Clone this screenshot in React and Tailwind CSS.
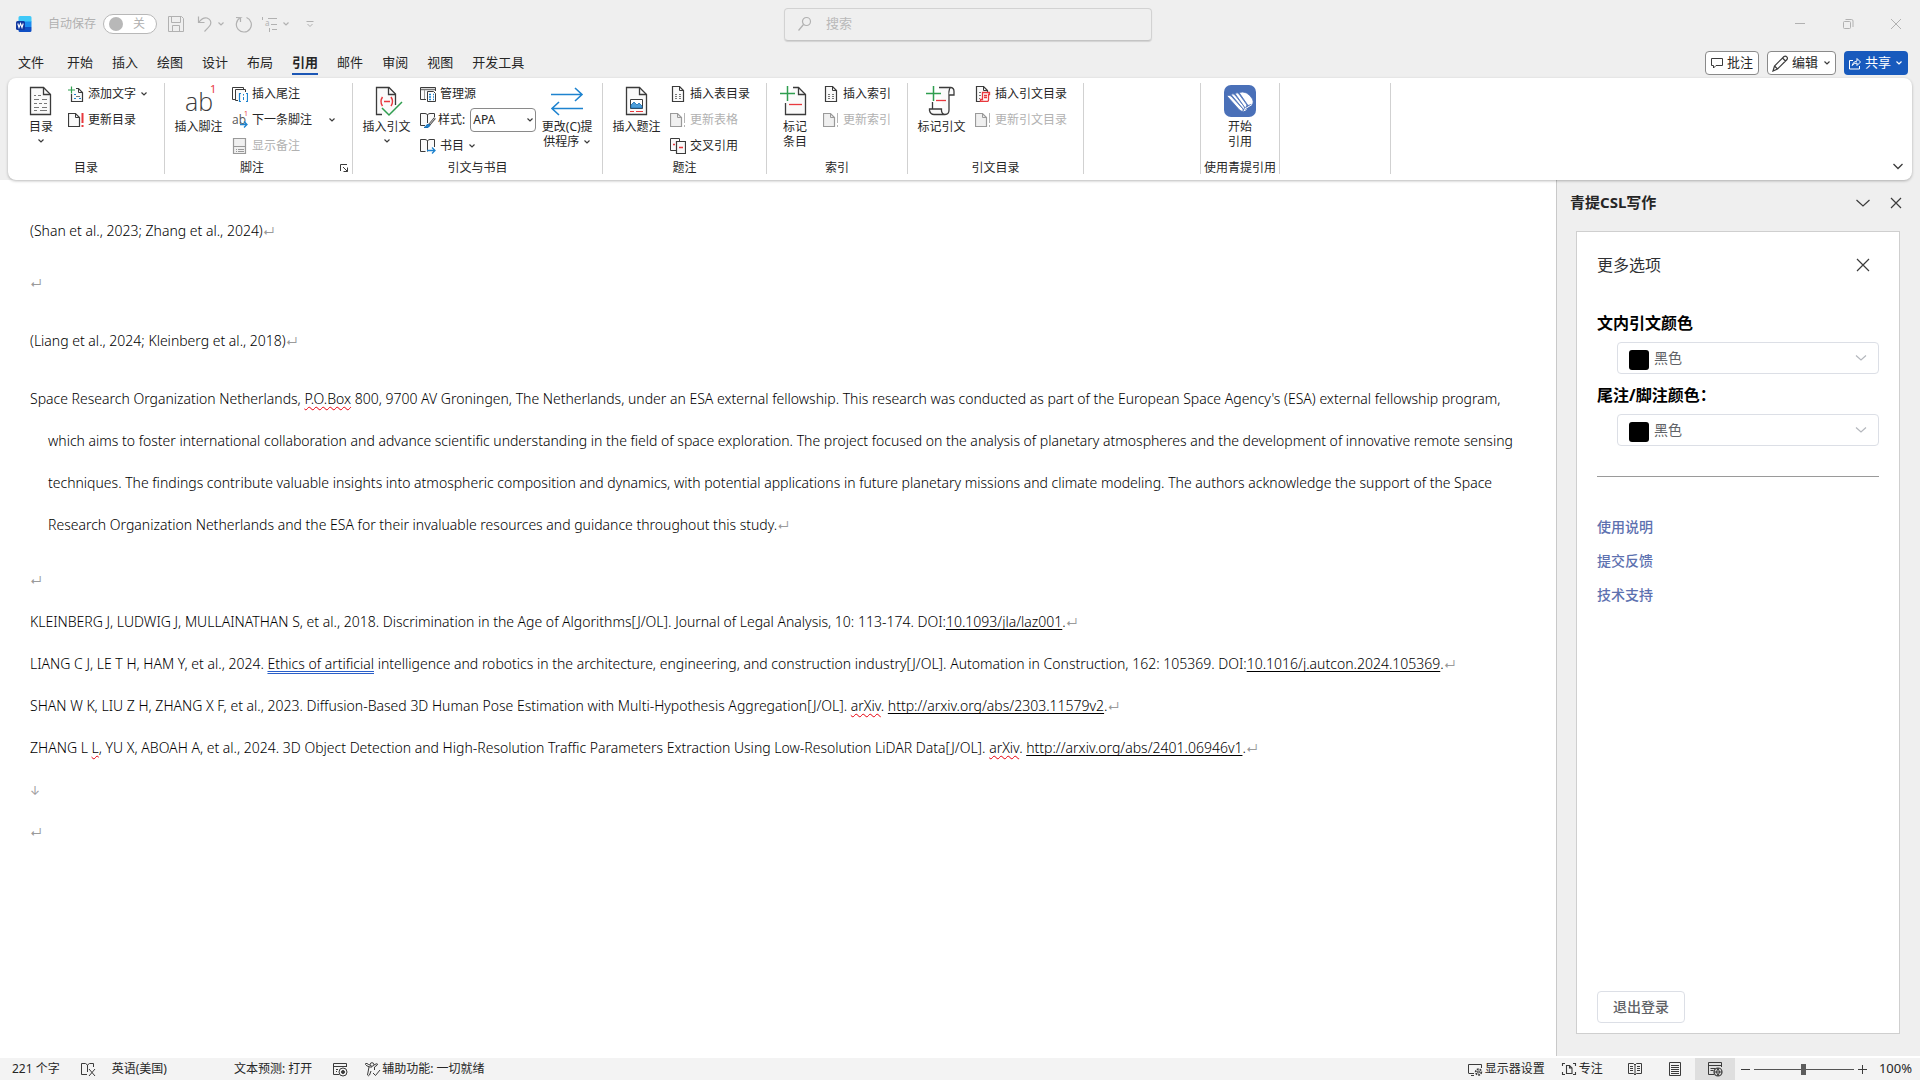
import React from 'react';

const INK = '#3b3b3b';
const RED = '#e8383d';
const GREEN = '#2f9e4f';
const BLUE = '#1e83cf';
const MUTED = '#b1b1b1';

function Svg({ w = 16, h = 16, children, className = '', stroke = INK }) {
  return (
    <svg width={w} height={h} viewBox={`0 0 ${w} ${h}`} fill="none" stroke={stroke} strokeWidth="1" aria-hidden="true" className={`shrink-0 ${className}`}>
      {children}
    </svg>
  );
}

const Caret = ({ className = '', color = INK }) => (
  <Svg w={8} h={6} stroke={color} className={className}><path d="M1.5 1.5 4 4l2.5-2.5" strokeWidth="1.2" /></Svg>
);

/* ---------- large ribbon icons, 32px ---------- */
const TocIcon = () => (
  <Svg w={32} h={32}>
    <path d="M5.5 2.5h13l7 7v20h-20z" fill="#fafafa" strokeWidth="1.3" />
    <path d="M18.500 2.500v7h7" strokeWidth="1.3" />
    <path d="M9 10.500h2m2 0h3M9 14.500h5m3 0h5M9 18.500h3m2 0h3m2 0h3M9 22.500h5m3 0h5M9 25.500h3m3 0h7" stroke="#777" />
  </Svg>
);
const FootnoteIcon = () => (
  <svg width="32" height="32" viewBox="0 0 32 32" aria-hidden="true" className="overflow-visible">
    <text x="2" y="26" fontSize="25" fontWeight="300" fontFamily="'Open Sans','Noto Sans',sans-serif" fill={INK}>ab</text>
    <text x="27" y="8" fontSize="11" fontFamily="'Noto Sans',sans-serif" fill={RED}>1</text>
  </svg>
);
const CiteIcon = () => (
  <Svg w={32} h={32}>
    <path d="M5.500 2.500h12.500l7 7v20h-19.500z" fill="#fafafa" stroke="none" />
    <path d="M11 29.500H5.500v-27H18l6.500 6.500v11" strokeWidth="1.300" />
    <path d="M17.500 2.500v7h7" strokeWidth="1.300" />
    <path d="M11.500 12q-3 4.500 0 9M20 12q3 4.500 0 9M13 16.500h6" stroke={RED} strokeWidth="1.500" />
    <path d="m11 23 7 7 13-13" stroke={GREEN} strokeWidth="1.500" />
  </Svg>
);
const SwapIcon = () => (
  <Svg w={34} h={32} stroke={BLUE}>
    <path d="M1 9.500h31M25 3l7 6.500-7 6.500M33 23.500H2M9 17l-7 6.500L9 30" strokeWidth="1.600" />
  </Svg>
);
const CaptionIcon = () => (
  <Svg w={32} h={32}>
    <path d="M5.500 2.500h13l7 7v20h-20z" fill="#fafafa" strokeWidth="1.300" />
    <path d="M18.500 2.500v7h7" strokeWidth="1.300" />
    <path d="M9.500 14.500h12v9h-12z" fill="#fff" />
    <path d="M10 22v-2l3-3 3 3 2-2 3 3v2H10z" fill="#4d9ed9" stroke="#1a6fb5" strokeWidth=".8" />
    <path d="M9 26.500h4m2 0h7" stroke={RED} />
  </Svg>
);
const MarkEntryIcon = () => (
  <Svg w={32} h={32}>
    <path d="M6.500 18v11.500h20v-20l-7-7H14" fill="#fafafa" strokeWidth="1.300" />
    <path d="M19.500 2.500v7h7" strokeWidth="1.300" />
    <path d="M10 19.500h13" stroke={RED} strokeWidth="1.300" />
    <path d="M1 8.500h15M8.500 1v15" stroke={GREEN} strokeWidth="1.500" />
  </Svg>
);
const MarkCiteIcon = () => (
  <Svg w={32} h={32}>
    <path d="M13 2.500h12q-2 1-2 4v18.500q0 4.500-4 4.500H8q-3.500 0-4.500-4V24h12v2q.500 3 3 3.500M6.500 17v7" fill="#fafafa" strokeWidth="1.300" />
    <path d="M25 2.500q3 .5 3 4v3.500h-5" fill="#fafafa" strokeWidth="1.300" />
    <path d="M10 15.500h10" stroke={RED} strokeWidth="1.300" />
    <path d="M0 8.500h15M7.500 1v15" stroke={GREEN} strokeWidth="1.500" />
  </Svg>
);
const QingtiIcon = () => (
  <Svg w={32} h={32}>
    <rect width="32" height="32" rx="7" fill="#4a70b8" stroke="none" />
    <path d="M3 11q2-1.500 4 0l12 13v2.500q-2 0-4-2z" fill="#fff" stroke="#4a70b8" strokeWidth=".8" />
    <path d="M7 9.500q2-1.500 4 .5l9.500 12-.5 3z" fill="#fff" stroke="#4a70b8" strokeWidth=".8" />
    <path d="M11 8.500q2.500-1.500 4 .5l8 11-1.500 3.500z" fill="#fff" stroke="#4a70b8" strokeWidth=".8" />
    <path d="M15 7.500Q23 5 28.500 14q1 2 .5 5l-5 1.500z" fill="#fff" stroke="#4a70b8" strokeWidth=".8" />
    <path d="M20 24.500l8-5M19.500 26l3-1.500" stroke="#fff" strokeWidth="1" />
  </Svg>
);

/* ---------- small ribbon icons, 16px ---------- */
const AddTextIcon = () => (
  <Svg><path d="M3.500 8v7.500h11v-9l-4-4H8" fill="#fafafa" strokeWidth="1.200" /><path d="M10.500 2.500v4h4" /><path d="M6 8.500h2M6 12.500h2m3 0h2" stroke={BLUE} /><path d="M8 10.500h4" stroke="#777" /><path d="M0 4h7M3.500.5v7" stroke={GREEN} strokeWidth="1.200" /></Svg>
);
const UpdateIcon = ({ muted = false }) => (
  <Svg stroke={muted ? '#9a9a9a' : INK}><path d="M.500 1.500h7l4 4v9H.500z" fill={muted ? '#f0f0f0' : '#fafafa'} strokeWidth="1.200" /><path d="M7.500 1.500v4h4" /><path d="M14.500 1v10m0 2v2" stroke={muted ? '#b5b5b5' : RED} strokeWidth={muted ? 1 : 2} /></Svg>
);
const EndnoteIcon = () => (
  <Svg><path d="M4 13.500H.500v-12h11V3" /><path d="M6 14.500H3.500v-11h10V6" fill="#fafafa" /><path d="M9 7.500H7.500v8H9M14 7.500h1.500v8H14" stroke={BLUE} strokeWidth="1.200" /><path d="M11.500 8v1.500m0 1.500v3" stroke={BLUE} /></Svg>
);
const NextNoteIcon = () => (
  <svg width="16" height="16" viewBox="0 0 16 16" aria-hidden="true" className="shrink-0 overflow-visible">
    <text x="0" y="12" fontSize="12" fontFamily="'Open Sans','Noto Sans',sans-serif" fill="#555">ab</text>
    <text x="12" y="4" fontSize="7" fontFamily="'Noto Sans',sans-serif" fill={RED}>1</text>
    <path d="M8 12.500h7M12 9.500l3 3-3 3" fill="none" stroke={BLUE} strokeWidth="1.300" />
  </svg>
);
const ShowNotesIcon = () => (
  <Svg stroke="#999"><path d="M1.500.500h12v15h-12z" fill="#f0f0f0" strokeWidth="1.200" /><path d="M1.500 8.500h12M4 11.500h1m1 0h6M4 13.500h1m1 0h6" /></Svg>
);
const SourcesIcon = () => (
  <Svg><path d="M6 13.500H.500v-12h15V5" fill="#fafafa" /><path d="M1 3.500h14" strokeWidth="1.500" stroke="#777" /><path d="M4.500 4v9" stroke="#999" /><path d="M7.500 5.500h6l2 2v8h-8z" fill="#fff" /><path d="M9 8.500h2m2 0h1M9 11h2m2 0h1M9 13.500h2m2 0h1" stroke={BLUE} strokeWidth="1.500" /></Svg>
);
const StyleIcon = () => (
  <Svg><path d="M5 13.500H.500v-12H5q2 0 2.500 1.500Q8 1.500 10 1.500h4.500V5M7.500 3v8" fill="#fafafa" /><path d="m15 6-6 7" strokeWidth="2.200" /><path d="m14.700 6.300-5.200 6" stroke="#fff" strokeWidth=".8" /><path d="M4 15.500q2-.5 2.500-2.500 2-1.500 3.500.500-1 3-6 2z" fill={BLUE} stroke="#1a6fb5" /></Svg>
);
const BiblioIcon = () => (
  <Svg><path d="M7.500 13.500V3M5.500 13.500h-5v-12H5q2 0 2.500 1.500Q8 1.500 10 1.500h4.500V9" fill="#fafafa" /><path d="M7 12.500h8M12 9.500l3 3-3 3" stroke={BLUE} strokeWidth="1.300" /></Svg>
);
const TableListIcon = () => (
  <Svg><path d="M2.500.500h7l4 4v11h-11z" fill="#fafafa" strokeWidth="1.200" /><path d="M9.500.500v4h4" /><path d="M5 8.500h2m2 0h2M5 10.500h2m2 0h2M5 12.500h2m2 0h2" stroke="#777" /></Svg>
);
const CrossRefIcon = () => (
  <Svg><path d="M6 12.500H.500V.500h9V3" fill="#fafafa" /><path d="M6.500 3.500h9v12h-9z" fill="#fafafa" strokeWidth="1.200" /><path d="M3 6.500h2M9 9.500h4" stroke={RED} strokeWidth="1.300" /></Svg>
);
const CiteListIcon = () => (
  <Svg><path d="M6 15.500H1.500V.500h7l4 4V6" fill="#fafafa" strokeWidth="1.200" /><path d="M8.500.500v4h4" /><path d="M4 6.500h2M4 9.500h2M4 12.500h1" stroke="#777" /><path d="M7.500 6.500h7v2h-1v5.500q0 1.500-1.500 1.500H5.500v-2h2zM9 9.500h3M9 11.500h3" stroke={RED} strokeWidth="1.300" /></Svg>
);

/* ---------- ribbon pieces ---------- */
function Big({ icon, lines, caret, className }) {
  return (
    <button type="button" className={`flex flex-col items-center self-start whitespace-nowrap text-xs leading-[15px] ${className}`}>
      <span className="flex h-9 items-center justify-center">{icon}</span>
      {lines.map((l, i) => (
        <span key={l} className="flex items-center">
          {l}
          {caret === 'inline' && i === lines.length - 1 && <Caret className="ml-1" />}
        </span>
      ))}
      {caret === 'below' && <Caret className="mt-1" />}
    </button>
  );
}

function Small({ icon, label, caret, muted }) {
  return (
    <button type="button" disabled={muted} className={`flex h-[22px] items-center gap-1 whitespace-nowrap text-xs ${muted ? 'text-[#b1b1b1]' : ''}`}>
      {icon}
      <span>{label}</span>
      {caret && <Caret className={caret} />}
    </button>
  );
}

function Group({ label, className, launcher, children }) {
  return (
    <section className={`flex h-[91px] shrink-0 flex-col justify-between border-r border-[#d1d1d1] ${className}`}>
      <div className="flex">{children}</div>
      <div className="flex h-3 items-center text-xs leading-3">
        <span className="flex-1 whitespace-nowrap text-center">{label}</span>
        {launcher && (
          <button type="button" aria-label="脚注和尾注" className="mr-[3px]">
            <Svg w={10} h={10}><path d="M1.500 8V1.500H8M4 4l4.500 4.500M8.500 4.500v4h-4" /></Svg>
          </button>
        )}
      </div>
    </section>
  );
}

const Col = ({ children }) => <div className="flex flex-col items-start gap-1">{children}</div>;

function TitleBar() {
  return (
    <header className="grid h-12 grid-cols-[1fr_368px_1fr] items-center pl-4 text-[#b1b1b1]">
      <div className="flex items-center">
        <svg width="16" height="16" viewBox="0 0 16 16" aria-hidden="true">
          <path d="M4 0h10a1.500 1.500 0 0 1 1.500 1.500V6H2.500V1.500A1.500 1.500 0 0 1 4 0z" fill="#3fc9f8" />
          <path d="M2.500 5.500h13v5.500h-13z" fill="#1a8cf0" />
          <path d="M2.500 11h13v3.500A1.500 1.500 0 0 1 14 16H4a1.500 1.500 0 0 1-1.500-1.500z" fill="#0f4fc4" />
          <rect y="5" width="9" height="9" rx="1.500" fill="#1238a0" />
          <path d="m1.800 7.500 1.200 4 1.500-4 1.500 4 1.200-4" fill="none" stroke="#fff" strokeWidth="1.100" />
        </svg>
        <span className="ml-4 text-xs">自动保存</span>
        <button type="button" role="switch" aria-checked="false" className="ml-[7px] flex h-5 w-[54px] items-center rounded-full border border-[#b8b8b8] bg-white pl-[5px] text-xs">
          <span className="size-[14px] rounded-full bg-[#b8b8b8]" />
          <span className="ml-[10px]">关</span>
        </button>
        <button type="button" aria-label="保存" className="ml-[11px]">
          <Svg stroke={MUTED}><path d="M.500.500h13l2 2v13H.500zM3.500.500v6h9v-6M4.500 15.500v-6h7v6" /></Svg>
        </button>
        <button type="button" aria-label="撤消" className="ml-[13px] flex items-center gap-1">
          <Svg stroke={MUTED}><path d="M1.500.500v6h6M2 6q4-5 8-4 5 2 3.500 6.500-1 2-6 7" strokeWidth="1.200" /></Svg>
          <Caret color={MUTED} />
        </button>
        <button type="button" aria-label="重复" className="ml-[10px]">
          <Svg w={17} h={17} stroke={MUTED}><path d="M11.500 1.500a7.500 7.500 0 1 1-6 .3L1 1.500M5.500 1.500V6" strokeWidth="1.200" /></Svg>
        </button>
        <button type="button" aria-label="编号" className="ml-[10px] flex items-center gap-1">
          <svg width="16" height="16" viewBox="0 0 16 16" aria-hidden="true" fill="none" stroke={MUTED} className="overflow-visible">
            <path d="M.500 1v3M6 2.500h9M9 8.500h6M7.500 12v4M10 13.500h5" />
            <text x="3" y="10" fontSize="8" stroke="none" fill={MUTED} fontFamily="'Noto Sans',sans-serif">a</text>
          </svg>
          <Caret color={MUTED} />
        </button>
        <button type="button" aria-label="自定义快速访问工具栏" className="ml-4">
          <Svg w={8} h={8} stroke={MUTED}><path d="M.500 1.500h7M1.500 4 4 6.500 6.500 4" /></Svg>
        </button>
      </div>
      <label className="flex h-[33px] items-center rounded border border-[#d2d2d2] border-b-[#c4c4c4] pl-3 shadow-[0_1px_1px_rgba(0,0,0,0.12)]">
        <Svg stroke={MUTED}><circle cx="9.500" cy="5.500" r="4" strokeWidth="1.200" /><path d="m6.500 8.500-5 6" strokeWidth="1.200" /></Svg>
        <input type="search" aria-label="搜索" placeholder="搜索" className="ml-[13px] w-full bg-transparent text-[13px] outline-none placeholder:text-[#b9b9b9]" />
      </label>
      <div className="flex justify-end gap-8 pr-4">
        <button type="button" aria-label="最小化"><Svg stroke={MUTED}><path d="M3 7.500h10" /></Svg></button>
        <button type="button" aria-label="还原"><Svg stroke={MUTED}><rect x="3.500" y="5.500" width="7" height="7" rx="1" /><path d="M5.500 3.500h6q1.500 0 1.500 1.500v6" /></Svg></button>
        <button type="button" aria-label="关闭"><Svg stroke={MUTED}><path d="m3 3 10 10M13 3 3 13" /></Svg></button>
      </div>
    </header>
  );
}

const TABS = ['开始', '插入', '绘图', '设计', '布局', '引用', '邮件', '审阅', '视图', '开发工具'];

function TabRow() {
  return (
    <div className="flex h-[30px] items-center justify-between pl-[18px] pr-3 text-[13px]">
      <nav className="flex h-full gap-[19px]">
        <button type="button" className="mr-1">文件</button>
        {TABS.map((t) => (
          <button key={t} type="button" className={t === '引用' ? 'relative font-bold after:absolute after:inset-x-0 after:bottom-[3px] after:h-0.5 after:bg-[#1b56b5]' : ''}>{t}</button>
        ))}
      </nav>
      <div className="flex gap-2">
        <button type="button" className="flex h-6 items-center gap-1 rounded border border-[#8a8a8a] bg-white px-[5px]">
          <Svg w={12} h={12}><path d="M.500 1.500h11v7H5l-2.500 2.500V8.500h-2z" /></Svg>批注
        </button>
        <button type="button" className="flex h-6 items-center gap-1 rounded border border-[#8a8a8a] bg-white px-1">
          <Svg w={16} h={17}><path d="m1 16 1.500-5L12 1.500q1.500-1 2.800.3 1.200 1.300.2 2.700L5.500 14zM10.500 3l3 3M2.500 11l3 3" strokeWidth="1.200" /></Svg>编辑
          <Caret className="ml-px" />
        </button>
        <button type="button" className="flex h-6 items-center gap-1 rounded bg-[#185abd] px-[5px] text-white">
          <Svg w={12} h={13} stroke="#fff"><path d="M4 3.500H.500v8.500h10V9M3 8.500Q4 4.500 8 4V1.500l3.500 3.500L8 8.500V6Q5 6 3 8.500z" /></Svg>共享
          <Caret color="#fff" />
        </button>
      </div>
    </div>
  );
}

function Ribbon() {
  return (
    <div className="relative z-10 mx-2 flex h-[102px] rounded-lg bg-white pt-[5px] shadow-[0_1px_3px_rgba(0,0,0,0.28)]">
      <Group label="目录" className="w-[157px]">
        <Big className="ml-1.5 w-[54px]" icon={<TocIcon />} lines={['目录']} caret="below" />
        <Col>
          <Small icon={<AddTextIcon />} label="添加文字" caret="ml-0" />
          <Small icon={<UpdateIcon />} label="更新目录" />
        </Col>
      </Group>
      <Group label="脚注" className="w-[188px]" launcher>
        <Big className="w-[67px]" icon={<FootnoteIcon />} lines={['插入脚注']} />
        <Col>
          <Small icon={<EndnoteIcon />} label="插入尾注" />
          <Small icon={<NextNoteIcon />} label="下一条脚注" caret="ml-3" />
          <Small icon={<ShowNotesIcon />} label="显示备注" muted />
        </Col>
      </Group>
      <Group label="引文与书目" className="w-[250px]">
        <Big className="w-[67px]" icon={<CiteIcon />} lines={['插入引文']} caret="below" />
        <Col>
          <Small icon={<SourcesIcon />} label="管理源" />
          <label className="flex h-[22px] items-center gap-0.5 whitespace-nowrap text-xs">
            <StyleIcon />
            样式:
            <span className="relative ml-[3px] flex items-center">
              <select defaultValue="APA" className="h-6 w-[66px] appearance-none rounded border border-[#8a8a8a] bg-white pl-0.5 text-xs outline-none">
                <option>APA</option>
                <option>MLA</option>
              </select>
              <Caret className="pointer-events-none absolute right-0.5" />
            </span>
          </label>
          <Small icon={<BiblioIcon />} label="书目" caret="ml-0" />
        </Col>
        <Big className="w-[62px]" icon={<SwapIcon />} lines={['更改(C)提', '供程序']} caret="inline" />
      </Group>
      <Group label="题注" className="w-[164px]">
        <Big className="w-[67px]" icon={<CaptionIcon />} lines={['插入题注']} />
        <Col>
          <Small icon={<TableListIcon />} label="插入表目录" />
          <Small icon={<UpdateIcon muted />} label="更新表格" muted />
          <Small icon={<CrossRefIcon />} label="交叉引用" />
        </Col>
      </Group>
      <Group label="索引" className="w-[141px]">
        <Big className="w-[56px]" icon={<MarkEntryIcon />} lines={['标记', '条目']} />
        <Col>
          <Small icon={<TableListIcon />} label="插入索引" />
          <Small icon={<UpdateIcon muted />} label="更新索引" muted />
        </Col>
      </Group>
      <Group label="引文目录" className="w-[176px]">
        <Big className="w-[67px]" icon={<MarkCiteIcon />} lines={['标记引文']} />
        <Col>
          <Small icon={<CiteListIcon />} label="插入引文目录" />
          <Small icon={<UpdateIcon muted />} label="更新引文目录" muted />
        </Col>
      </Group>
      <Group label="" className="w-[117px]" />
      <Group label="使用青提引用" className="w-[79px]">
        <Big className="w-full" icon={<QingtiIcon />} lines={['开始', '引用']} />
      </Group>
      <Group label="" className="w-[111px]" />
      <button type="button" aria-label="折叠功能区" className="mb-2 ml-auto mr-2 self-end">
        <Svg w={12} h={12}><path d="m1.500 4 4.500 4.500L10.500 4" strokeWidth="1.300" /></Svg>
      </button>
    </div>
  );
}

const Mark = ({ children = '↵' }) => <span className="font-['Inter'] text-xs font-normal text-[#9b9b9b]">{children}</span>;
const Typo = ({ children }) => (
  <span className="underline decoration-red-600 decoration-wavy decoration-1 underline-offset-2 [text-decoration-skip-ink:none]">{children}</span>
);
const Ref = ({ href, children }) => (
  <a href={href} className="underline underline-offset-2 [text-decoration-skip-ink:none]">{children}</a>
);

function Document() {
  return (
    <main lang="en" className="min-w-0 flex-1 bg-white pl-[30px] pr-9 pt-[30px] text-sm font-light leading-[42px] text-black">
      <p>(Shan et al., 2023; Zhang et al., 2024)<Mark /></p>
      <p className="mt-2.5"><Mark /></p>
      <p className="mt-4">(Liang et al., 2024; Kleinberg et al., 2018)<Mark /></p>
      <p className="mt-4 pl-[18px] -indent-[18px]">
        Space Research Organization Netherlands, <Typo>P.O.Box</Typo> 800, 9700 AV Groningen, The Netherlands, under an ESA external fellowship. This research was conducted as part of the European Space Agency's (ESA) external fellowship program, which aims to foster international collaboration and advance scientific understanding in the field of space exploration. The project focused on the analysis of planetary atmospheres and the development of innovative remote sensing techniques. The findings contribute valuable insights into atmospheric composition and dynamics, with potential applications in future planetary missions and climate modeling. The authors acknowledge the support of the Space Research Organization Netherlands and the ESA for their invaluable resources and guidance throughout this study.<Mark />
      </p>
      <p className="mt-[13px]"><Mark /></p>
      <p>KLEINBERG J, LUDWIG J, MULLAINATHAN S, et al., 2018. Discrimination in the Age of Algorithms[J/OL]. Journal of Legal Analysis, 10: 113-174. DOI:<Ref href="https://doi.org/10.1093/jla/laz001">10.1093/jla/laz001</Ref>.<Mark /></p>
      <p>LIANG C J, LE T H, HAM Y, et al., 2024. <span className="underline decoration-[#2a5fc9] decoration-double decoration-1 underline-offset-2 [text-decoration-skip-ink:none]">Ethics of artificial</span> intelligence and robotics in the architecture, engineering, and construction industry[J/OL]. Automation in Construction, 162: 105369. DOI:<Ref href="https://doi.org/10.1016/j.autcon.2024.105369">10.1016/j.autcon.2024.105369</Ref>.<Mark /></p>
      <p>SHAN W K, LIU Z H, ZHANG X F, et al., 2023. Diffusion-Based 3D Human Pose Estimation with Multi-Hypothesis Aggregation[J/OL]. <Typo>arXiv</Typo>. <Ref href="http://arxiv.org/abs/2303.11579v2">http://arxiv.org/abs/2303.11579v2</Ref>.<Mark /></p>
      <p>ZHANG L <Typo>L</Typo>, YU X, ABOAH A, et al., 2024. 3D Object Detection and High-Resolution Traffic Parameters Extraction Using Low-Resolution LiDAR Data[J/OL]. <Typo>arXiv</Typo>. <Ref href="http://arxiv.org/abs/2401.06946v1">http://arxiv.org/abs/2401.06946v1</Ref>.<Mark /></p>
      <p><Mark>↓</Mark></p>
      <p><Mark /></p>
    </main>
  );
}

function ColorField({ id, label }) {
  return (
    <div className="mb-[5px]">
      <label htmlFor={id} className="block text-base font-bold leading-8">{label}</label>
      <div className="relative ml-5 mt-[3px] flex items-center">
        <span className="pointer-events-none absolute left-3 top-2 size-5 rounded-[3px] bg-black" />
        <select id={id} defaultValue="黑色" className="h-8 w-full appearance-none rounded border border-[#dcdfe6] bg-white pl-9 text-sm text-[#606266] outline-none">
          <option>黑色</option>
          <option>蓝色</option>
        </select>
        <Svg w={12} h={8} stroke="#b4b7bd" className="pointer-events-none absolute right-3"><path d="m1 1.500 5 4.500 5-4.500" strokeWidth="1.200" /></Svg>
      </div>
    </div>
  );
}

function TaskPane() {
  return (
    <aside className="flex w-[364px] shrink-0 flex-col border-l border-[#c9c9c9] pb-[22px]">
      <div className="flex h-[51px] items-center pl-[13px] pr-4 pb-1.5">
        <h2 className="flex-1 text-[15px] font-bold">青提CSL写作</h2>
        <button type="button" aria-label="任务窗格选项" className="mr-[17px]"><Svg><path d="m1.500 5 6.500 6 6.500-6" strokeWidth="1.200" /></Svg></button>
        <button type="button" aria-label="关闭窗格"><Svg><path d="m3 3 10 10M13 3 3 13" strokeWidth="1.200" /></Svg></button>
      </div>
      <div className="ml-[19px] mr-5 flex flex-1 flex-col border border-[#cfcfcf] bg-white pb-[10px] pl-5 pr-5 text-black">
        <div className="flex h-[66px] items-center justify-between pr-2 text-[#303133]">
          <h3 className="text-base">更多选项</h3>
          <button type="button" aria-label="关闭"><Svg><path d="m2 2 12 12M14 2 2 14" strokeWidth="1.200" /></Svg></button>
        </div>
        <div className="pt-[9px]">
          <ColorField id="inline-color" label="文内引文颜色" />
          <ColorField id="note-color" label="尾注/脚注颜色：" />
        </div>
        <hr className="mt-[25px] border-[#9a9a9a]" />
        <nav className="mt-9 flex flex-col items-start gap-[14px] pt-1 text-sm font-medium text-[#5d71b0]">
          <a href="#help">使用说明</a>
          <a href="#feedback">提交反馈</a>
          <a href="#support">技术支持</a>
        </nav>
        <button type="button" className="mt-auto h-8 w-[88px] rounded border border-[#dcdfe6] text-sm font-medium text-[#606266]">退出登录</button>
      </div>
    </aside>
  );
}

function StatusBar() {
  return (
    <footer className="flex h-6 items-center border-t-2 border-white bg-[#f3f3f3] pl-3 pr-2 text-xs">
      <span>221 个字</span>
      <button type="button" aria-label="校对" className="ml-5"><Svg><path d="M7 13.500H1.500v-11h4l2 1.500 2-1.500h4V6M7.500 4v7M9 8l6 7M15 8l-6 7" /></Svg></button>
      <button type="button" className="ml-4">英语(美国)</button>
      <button type="button" className="ml-[67px]">文本预测: 打开</button>
      <button type="button" aria-label="宏" className="ml-5"><Svg><path d="M7 13.500H1.500v-11h13V6M1.500 5.500h13M4 8.500h2M4 10.500h1" /><circle cx="11" cy="11" r="4" fill="#f3f3f3" /><circle cx="11" cy="11" r="1.500" fill={INK} /></Svg></button>
      <button type="button" className="ml-4 flex items-center gap-px">
        <Svg w={17}><circle cx="8" cy="3.500" r="1.800" /><path d="M8 6H6Q2 5 1.500 3.500T3 2.500q2 1.500 3 1.500M10 4q3-2 3.500-1t-3 3v3M5 6l-1.500 8q1 1.500 2 0L7 10M9 12l2.500 2.500L16 9" /></Svg>
        辅助功能: 一切就绪
      </button>
      <div className="ml-auto flex h-full items-center">
        <button type="button" className="flex items-center gap-0.5"><Svg><path d="M7 12.500H2q-.500 0-.500-.5V3.500h13V7M4 14.500h3" /><circle cx="11.500" cy="11" r="2.800" strokeWidth="1.800" strokeDasharray="1.800 1" /><circle cx="11.500" cy="11" r="1" /></Svg>显示器设置</button>
        <button type="button" className="ml-4 flex items-center gap-0.5"><Svg><path d="M4 2.500H1.500V5M12 2.500h2.500V5M1.500 11v2.500H4M14.500 11v2.500H12M5.500 4.500h3l2.500 2.500v5.500H5.500zM8.500 4.500V7H11" strokeWidth="1.100" /></Svg>专注</button>
        <button type="button" aria-label="阅读视图" className="ml-6"><Svg><path d="M1.500 2.500h5L8 4l1.500-1.500h5v10h-5L8 14l-1.500-1.500h-5zM8 4v9M3 5.500h3M3 7.500h3M3 9.500h3M10 5.500h3M10 7.500h3M10 9.500h3" /></Svg></button>
        <button type="button" aria-label="页面视图" className="ml-6 mr-3"><Svg><path d="M2.500 1.500h11v13h-11zM4 4.500h8M4 6.500h8M4 8.500h8M4 10.500h8M4 12.500h8" /></Svg></button>
        <button type="button" aria-label="Web 版式视图" aria-pressed="true" className="flex h-full w-10 items-center justify-center bg-[#dedede]"><Svg><path d="M7 13.500H1.500v-12h13V6M1.500 4.500h13M3.500 7.500h5M3.500 9.500h3" /><circle cx="11" cy="11" r="4" fill="#dedede" strokeWidth="1.200" /><path d="M7 11h8M11 7q-3 4 0 8M11 7q3 4 0 8" /></Svg></button>
        <button type="button" aria-label="缩小" className="ml-1.5"><Svg w={9} h={9}><path d="M0 4.500h9" /></Svg></button>
        <input type="range" aria-label="显示比例" min="10" max="190" defaultValue="100" className="mx-1 h-3 w-[100px] appearance-none bg-transparent bg-[linear-gradient(#555,#555)] bg-[length:100%_1px] bg-center bg-no-repeat [&::-webkit-slider-thumb]:h-[11px] [&::-webkit-slider-thumb]:w-[5px] [&::-webkit-slider-thumb]:appearance-none [&::-webkit-slider-thumb]:bg-[#5c5c5c]" />
        <button type="button" aria-label="放大"><Svg w={9} h={9}><path d="M0 4.500h9M4.500 0v9" /></Svg></button>
        <span className="ml-3 text-[13px]">100%</span>
      </div>
    </footer>
  );
}

export default function App() {
  return (
    <div lang="zh-CN" className="flex h-screen flex-col overflow-hidden bg-[#efefef] font-['Noto_Sans','Noto_Sans_CJK_SC',sans-serif] text-[#262626]">
      <TitleBar />
      <TabRow />
      <Ribbon />
      <div className="flex min-h-0 flex-1">
        <Document />
        <TaskPane />
      </div>
      <StatusBar />
    </div>
  );
}
